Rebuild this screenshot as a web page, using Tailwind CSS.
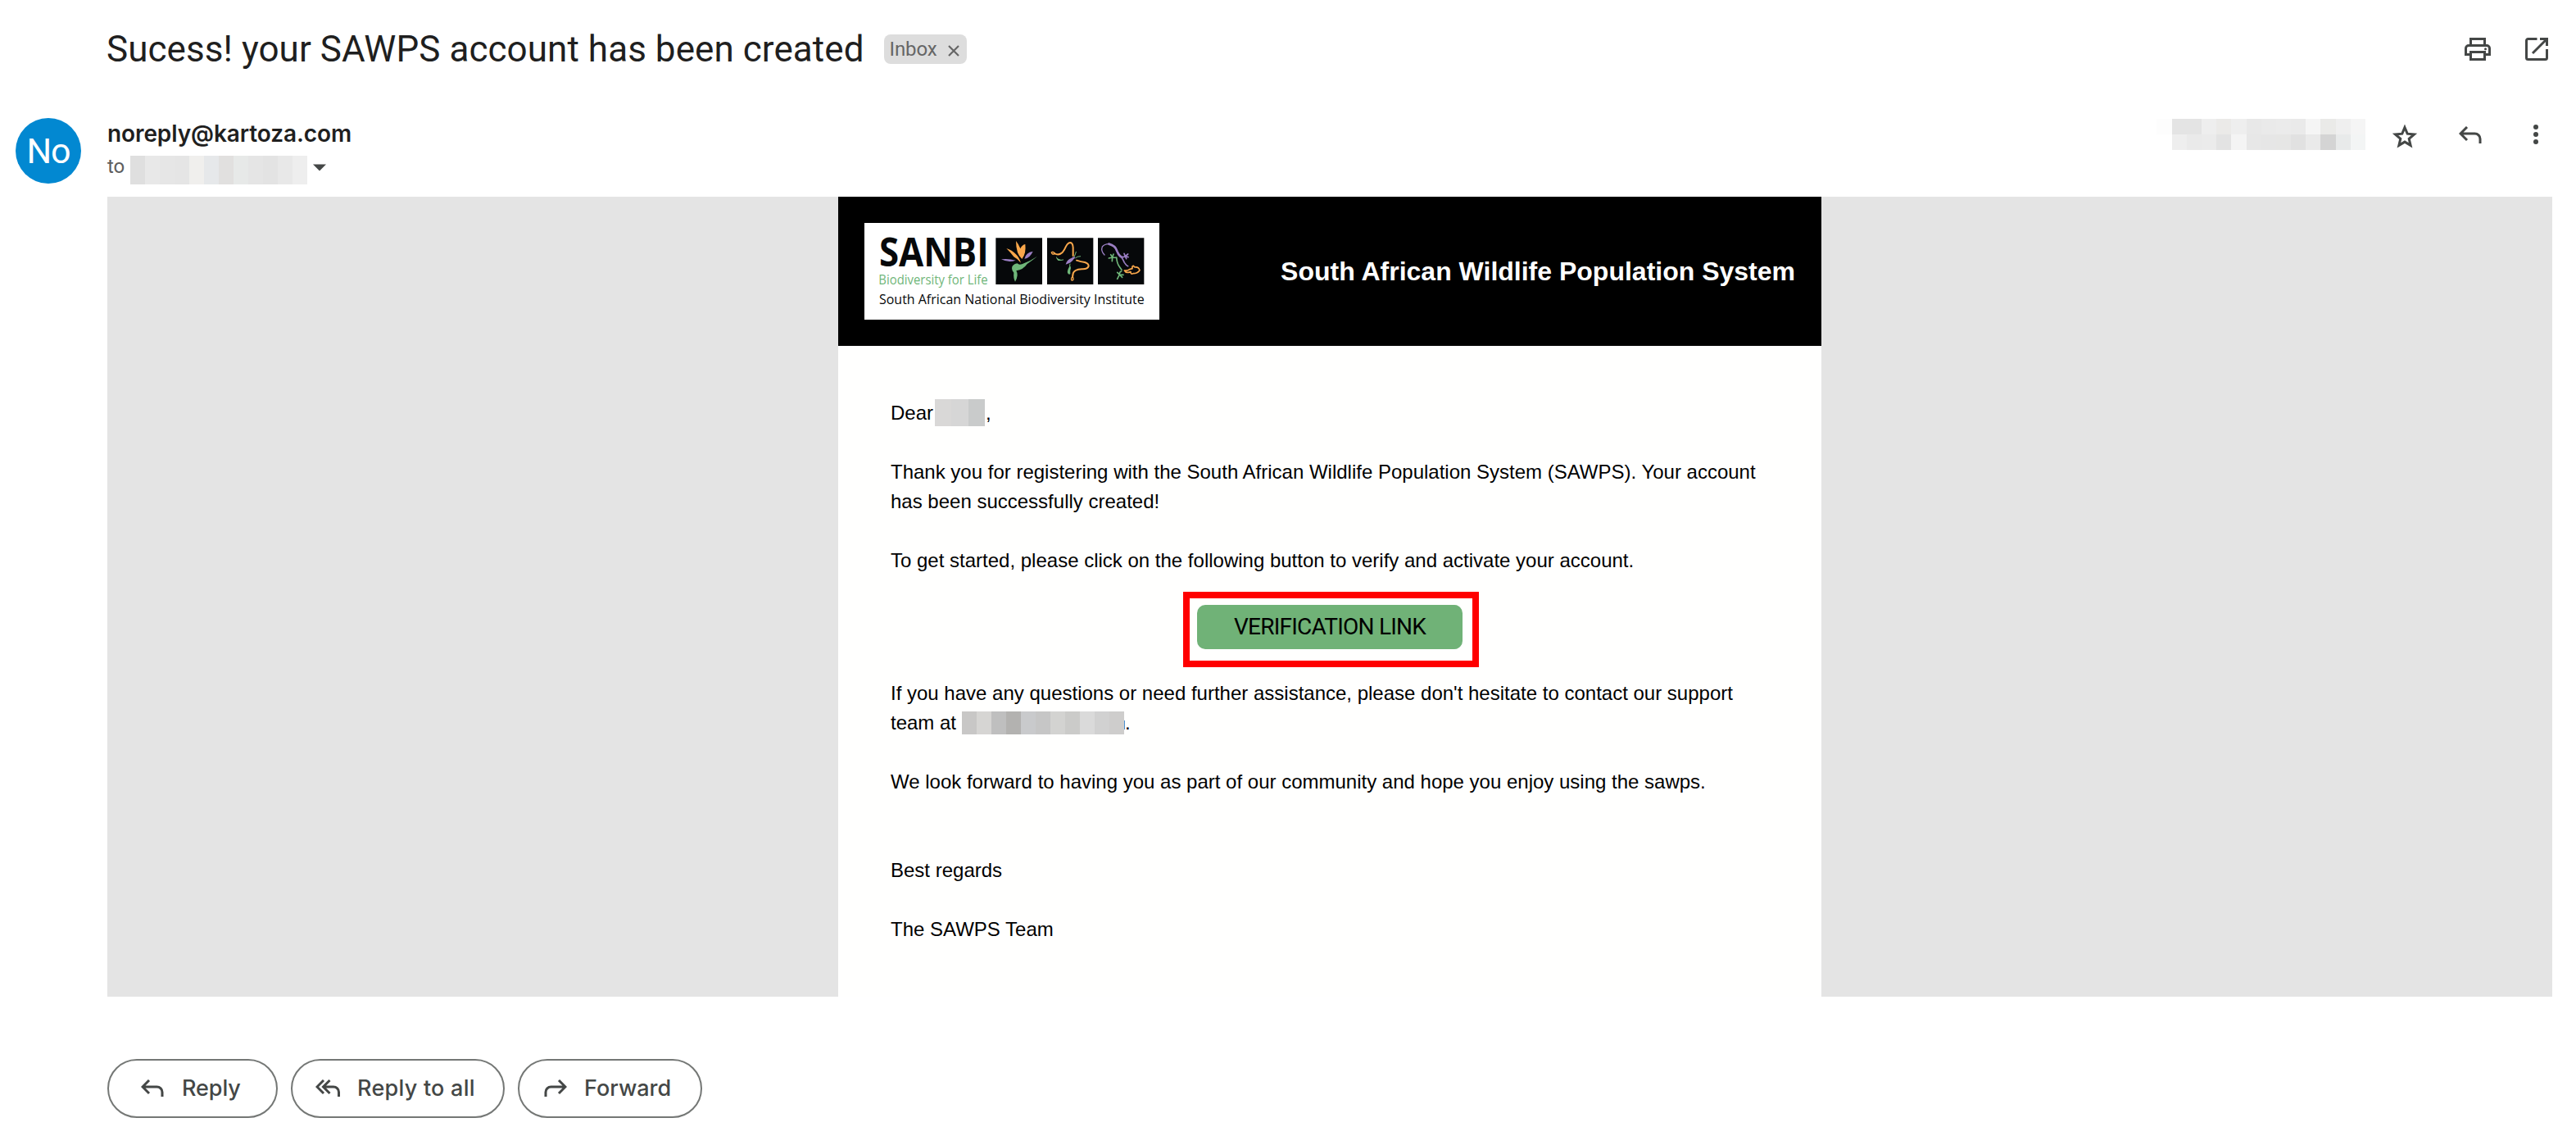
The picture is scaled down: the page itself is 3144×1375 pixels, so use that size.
<!DOCTYPE html>
<html lang="en">
<head>
<meta charset="utf-8">
<title>Sucess! your SAWPS account has been created</title>
<script src="https://cdn.jsdelivr.net/npm/@tailwindcss/browser@4"></script>
</head>
<body class="bg-white w-[3144px] h-[1375px] overflow-hidden font-['Roboto',sans-serif] text-[#1f1f1f]">

<!-- Subject -->
<header class="flex h-[120px] items-center pl-[130px] pr-[35px]">
  <h1 class="text-[44px] leading-[52px] tracking-[0.06px] whitespace-nowrap">Sucess! your SAWPS account has been created</h1>
  <div class="ml-[24px] flex h-9 w-[101px] items-center justify-between rounded-lg bg-[#ddd] pl-[7px] pr-[9px] text-2xl leading-9 text-[#666]">
    <span class="tracking-[-0.1px]">Inbox</span>
    <svg class="mt-1 h-[14px] w-[14px]" viewBox="0 0 14 14" fill="none" stroke="#666" stroke-width="2.2"><path d="M1 1l12 12M13 1L1 13"/></svg>
  </div>
  <div class="ml-auto flex items-center gap-[42px]">
    <svg class="h-7 w-8" viewBox="0 0 32 28" fill="none" stroke="#444746" stroke-width="3"><path d="M7.5 9V1.5h17V9M6 20.5H1.500V13a3.500 3.500 0 0 1 3.500-3.500h22a3.500 3.500 0 0 1 3.500 3.500v7.500H26"/><path d="M7.500 17.500h17v9h-17z"/><circle cx="25.500" cy="13.700" r="1.500" fill="#444746" stroke="none"/></svg>
    <svg class="mr-[-1px] h-7 w-7" viewBox="0 0 28 28" fill="none" stroke="#444746" stroke-width="3"><path d="M14.500 1.500h-11a2 2 0 0 0-2 2v21a2 2 0 0 0 2 2h21a2 2 0 0 0 2-2V14M18 1.500h8.500V10M26 2L9 19"/></svg>
  </div>
</header>

<!-- Sender -->
<section class="flex h-[120px] pl-[19px] pr-[46px] pt-6">
  <div class="flex h-20 w-20 items-center justify-center rounded-full bg-[#0288d1] text-[43px] tracking-[-1px] text-white">No</div>
  <div class="ml-8">
    <p class="font-['Inter',sans-serif] text-[28px] leading-[39px] font-semibold tracking-[-0.1px]">noreply@kartoza.com</p>
    <div class="mt-[7px] flex h-[35px]">
      <span class="w-[28px] text-2xl leading-[27px] text-[#5e5e5e]">to</span>
      <div class="flex">
        <i class="w-[18px] bg-[#dfdfdf]"></i><i class="w-[18px] bg-[#e8e8e8]"></i><i class="w-[18px] bg-[#e6e6e6]"></i><i class="w-[18px] bg-[#e5e5e5]"></i><i class="w-[18px] bg-[#f0efed]"></i><i class="w-[18px] bg-[#e6e8ea]"></i><i class="w-[18px] bg-[#e1e0df]"></i><i class="w-[18px] bg-[#e7e9e8]"></i><i class="w-[18px] bg-[#e5e5e5]"></i><i class="w-[18px] bg-[#e3e3e3]"></i><i class="w-[18px] bg-[#e8e8e8]"></i><i class="w-[18px] bg-[#eee]"></i>
      </div>
      <svg class="mt-[10px] ml-[7px] h-[9px] w-4" viewBox="0 0 16 9"><path d="M0 .6h16L8 8.600z" fill="#444746"/></svg>
    </div>
  </div>
  <div class="ml-auto flex h-10 items-center">
    <div class="mr-[32px] grid h-[38px] grid-cols-[repeat(14,18.2px)] grid-rows-2">
      <i class="bg-[#fdfdfd]"></i><i class="bg-[#e4e4e4]"></i><i class="bg-[#e4e4e4]"></i><i class="bg-[#eee]"></i><i class="bg-[#ebeae8]"></i><i class="bg-[#eee]"></i><i class="bg-[#e8e8e8]"></i><i class="bg-[#eaeaea]"></i><i class="bg-[#ebebeb]"></i><i class="bg-[#eaeaea]"></i><i class="bg-[#f5f5f5]"></i><i class="bg-[#eaeae8]"></i><i class="bg-[#efefef]"></i><i class="bg-[#f5f5f5]"></i>
      <i class="bg-white"></i><i class="bg-[#eee]"></i><i class="bg-[#eaeaea]"></i><i class="bg-[#ebebeb]"></i><i class="bg-[#e3e3e3]"></i><i class="bg-[#f4f4f4]"></i><i class="bg-[#e7e7e7]"></i><i class="bg-[#e6e6e6]"></i><i class="bg-[#e6e6e5]"></i><i class="bg-[#e1e1e1]"></i><i class="bg-[#eaeaea]"></i><i class="bg-[#d4d4d4]"></i><i class="bg-[#e8eaea]"></i><i class="bg-[#f3f5f5]"></i>
    </div>
    <svg class="mt-[3px] mr-[50px] h-[30px] w-8" viewBox="0 0 32 30" fill="none" stroke="#444746" stroke-width="3"><path d="M16 4.500l3.200 7.700 8.300.7-6.300 5.400 1.900 8.100-7.100-4.300-7.100 4.300 1.900-8.100-6.300-5.400 8.300-.7z"/></svg>
    <svg class="mt-[1px] mr-[63px] h-[22px] w-7" viewBox="0 0 28 22" fill="none" stroke="#444746" stroke-width="3"><path d="M10 1L2 9l8 8M2 9h17.500a6.500 6.500 0 0 1 6.500 6.500V21"/></svg>
    <svg class="h-6 w-[6px]" viewBox="0 0 6 24" fill="#444746"><circle cx="3" cy="3" r="3"/><circle cx="3" cy="12" r="3"/><circle cx="3" cy="21" r="3"/></svg>
  </div>
</section>

<!-- Message -->
<main class="ml-[131px] flex h-[976px] w-[2984px] bg-[#e4e4e4] pl-[892px] font-['Liberation_Sans',Arial,sans-serif] text-2xl leading-9 text-black">
  <article class="flex w-[1200px] flex-col bg-[#fffffe]">
    <div class="flex h-[182px] items-center justify-between bg-black px-8">
      <svg class="h-[118px] w-[360px] bg-white" viewBox="135 126 1080 354" font-family="'Open Sans','Noto Sans',sans-serif">
        <text x="189" y="285" font-size="143" font-weight="700" fill="#06080a" textLength="401" lengthAdjust="spacingAndGlyphs">SANBI</text>
        <text x="187" y="351" font-size="47" fill="#6fb679" textLength="400" lengthAdjust="spacingAndGlyphs">Biodiversity for Life</text>
        <text x="189" y="423" font-size="49" fill="#06080a" textLength="971" lengthAdjust="spacingAndGlyphs">South African National Biodiversity Institute</text>
        <path fill="#06080a" d="M616 181h170v170H616zM804 181h169v170H804zM990 181h169v170H990z"/>
        <!-- strelitzia -->
        <path fill="#f9a74b" d="M690 192q10 12 16 28q6-14 18-16q4 34-12 54q-22-18-22-66zM655 219q20 6 35 22q10 8 18 31q-14-16-26-22q-10-14-27-31z"/>
        <path fill="#9b7fc4" d="M636 259q28-3 53 4q-26 10-53-4zM752 230q-26 4-31 27q20-2 31-27z"/>
        <path fill="#6fb679" d="M768 248q-26 18-56 29q-12 4-17-3q-20 4-20 18q0 10 7 16q-2 20 5 33q14-24 4-40q26-4 40-25q20-14 37-28z"/>
        <!-- butterfly -->
        <g fill="none" stroke-linecap="round" stroke-linejoin="round">
          <path stroke="#f9a74b" stroke-width="6" d="M830 237q16 10 30-3q8-10 13-22q7-14 17-14q8 2 9 18l0 30"/>
          <path stroke="#f9a74b" stroke-width="4" d="M832 237q-8-8-12-3q2 8 10 6"/>
          <path stroke="#f9a74b" stroke-width="6" d="M912 263q16 6 30 7q14 4 14 14q-4 12-24 11q-16 0-24 5q-10 6-10 18l-1 6"/>
          <path stroke="#f9a74b" stroke-width="4" d="M897 322q-7 8-3 14q6 2 6-6q0-4-3-8"/>
          <path stroke="#6fb679" stroke-width="3" d="M904 248q4-8 6-16M908 254q6-6 18-6M845 262q8 2 18-1M888 276q-2 6-2 16"/>
        </g>
        <path fill="#9b7fc4" d="M872 278q4-18 22-24q8-6 13-3q0 4-6 8q-8 14-29 19z"/>
        <path fill="#6fb679" d="M837 248q0 12 10 16q8 1 10-3q-14-2-20-13zM889 283q-12 12-10 26q4 8 10 4q-2-12 2-22z"/>
        <!-- gecko -->
        <g fill="none" stroke-linecap="round" stroke-linejoin="round">
          <path stroke="#9b7fc4" stroke-width="4" d="M1014 243q-14-14-8-30q10-12 28-10"/>
          <path stroke="#9b7fc4" stroke-width="8" d="M1030 203q24 6 30 26q4 12 13 20"/>
          <path stroke="#9b7fc4" stroke-width="5" d="M1073 247q10 14 14 24q6 10 13 13M1076 249q8 4 14-1M1090 248l-4-10M1090 248l10-8M1090 248l11 3M1090 248l4 9"/>
          <path stroke="#6fb679" stroke-width="5" d="M1058 252q2 24 12 36l7 10M1057 253l-14-1M1043 252l-13 3M1043 252l-6-10M1043 252l4-12M1043 252l-1 14M1076 303q-8 2-7 12M1069 315l-8-8M1069 315l14 1M1069 315l10 10M1069 315l-8 16"/>
          <path stroke="#f9a74b" stroke-width="5" d="M1087 300q12 2 19-4l10-3q-2-8 4-10l5 5q14-2 18 11q-8 12-24 12q-10 4-9-6l-8 2q-10 2-15-7"/>
        </g>
      </svg>
      <h2 class="text-[32px] leading-9 font-bold whitespace-nowrap text-white">South African Wildlife Population System</h2>
    </div>
    <div class="flex flex-col gap-9 px-16 pt-16">
      <p class="flex h-9 items-center"><span>Dear</span>
        <span class="mt-[-1px] ml-[2px] mr-px flex h-[33px]"><i class="w-5 bg-[#d9d8d7]"></i><i class="w-[21px] bg-[#d6d6d6]"></i><i class="w-5 bg-[#c9cbcb]"></i></span><span>,</span></p>
      <p class="whitespace-nowrap">Thank you for registering with the South African Wildlife Population System (SAWPS). Your account<br>has been successfully created!</p>
      <p>To get started, please click on the following button to verify and activate your account.</p>
      <div class="relative h-[54px] w-[324px] self-center">
        <a class="flex h-full items-center justify-center rounded-[10px] bg-[#70b277] font-['Roboto',sans-serif] text-[28px] tracking-[-0.77px]">VERIFICATION LINK</a>
        <div class="absolute -top-4 -right-5 -bottom-[22px] -left-[17px] border-8 border-[#f00]"></div>
      </div>
      <div>
        <p class="whitespace-nowrap">If you have any questions or need further assistance, please don't hesitate to contact our support</p>
        <p class="flex h-9 items-center"><span class="w-[87px]">team at</span>
          <span class="flex h-7"><i class="w-[18px] bg-[#c8c7c6]"></i><i class="w-[18px] bg-[#d6d5d3]"></i><i class="w-[18px] bg-[#bfbfbf]"></i><i class="w-[18px] bg-[#b3b2b0]"></i><i class="w-[18px] bg-[#c9cacc]"></i><i class="w-[18px] bg-[#c6c6c6]"></i><i class="w-[18px] bg-[#d3d3d1]"></i><i class="w-[18px] bg-[#cbcbc9]"></i><i class="w-[18px] bg-[#dadada]"></i><i class="w-[18px] bg-[#d1d1d1]"></i><i class="w-[18px] bg-[#cecdcc]"></i><i class="mt-[11px] h-[11px] w-px bg-[#4a8fd0]"></i></span><span>.</span></p>
      </div>
      <p>We look forward to having you as part of our community and hope you enjoy using the sawps.</p>
      <p class="mt-9">Best regards</p>
      <p>The SAWPS Team</p>
    </div>
  </article>
</main>

<!-- Actions -->
<footer class="mt-[76px] ml-[131px] flex gap-4 font-['Inter',sans-serif] text-[27px] font-medium text-[#444746]">
  <button class="flex h-[72px] w-[208px] items-center rounded-full border-2 border-[#747775] pl-[39px]">
    <svg class="mr-[22px] h-[22px] w-7" viewBox="0 0 28 22" fill="none" stroke="#444746" stroke-width="3"><path d="M10 1L2 9l8 8M2 9h17.500a6.500 6.500 0 0 1 6.500 6.500V21"/></svg>
    <span class="tracking-[-0.1px]">Reply</span>
  </button>
  <button class="flex h-[72px] w-[261px] items-center rounded-full border-2 border-[#747775] pl-[28px]">
    <svg class="mr-[21px] h-[22px] w-[30px]" viewBox="0 0 30 22" fill="none" stroke="#444746" stroke-width="3"><path d="M10 1L2 9l8 8M17.500 1l-8 8 8 8M9.500 9H22a6.500 6.500 0 0 1 6.500 6.500V21"/></svg>
    <span class="tracking-[0.25px]">Reply to all</span>
  </button>
  <button class="flex h-[72px] w-[225px] items-center rounded-full border-2 border-[#747775] pl-[30px]">
    <svg class="mr-[21px] h-[22px] w-7" viewBox="0 0 28 22" fill="none" stroke="#444746" stroke-width="3"><path d="M18 1l8 8-8 8M26 9H8.500A6.500 6.500 0 0 0 2 15.500V21"/></svg>
    <span>Forward</span>
  </button>
</footer>
</body>
</html>
